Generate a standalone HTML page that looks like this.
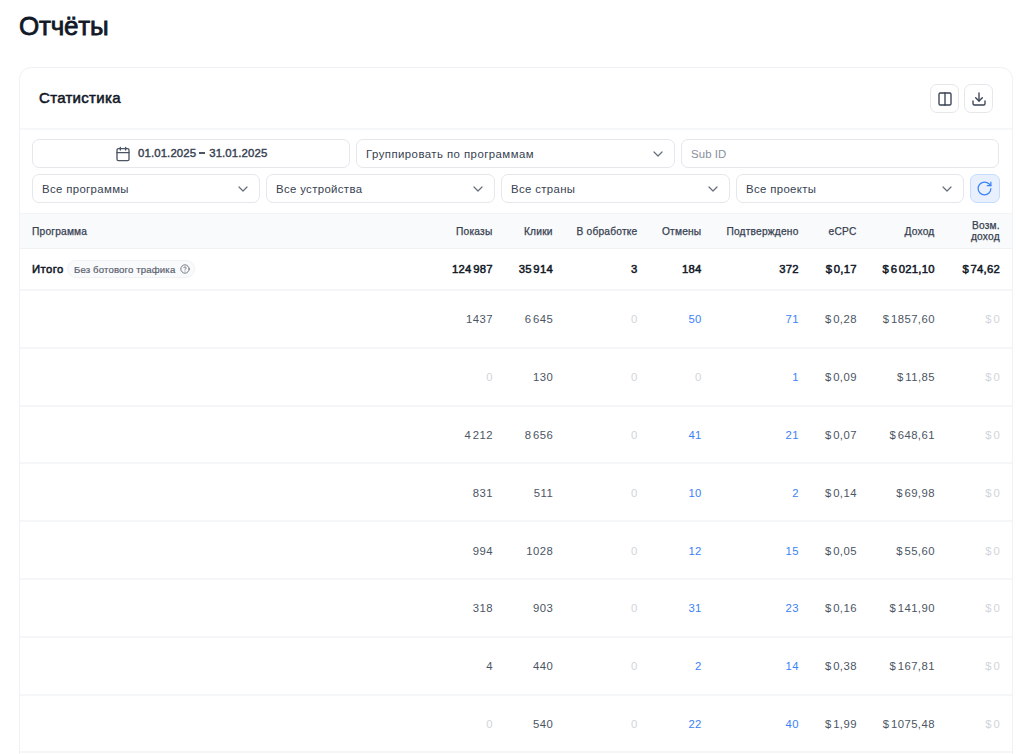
<!DOCTYPE html>
<html><head><meta charset="utf-8">
<style>
*{box-sizing:border-box;margin:0;padding:0}
html,body{width:1024px;height:754px;overflow:hidden;background:#fff;font-family:"Liberation Sans",sans-serif;color:#111827}
.a{position:absolute;white-space:nowrap}
.r{position:absolute;white-space:nowrap;text-align:right}
h1{position:absolute;left:19px;top:11px;font-size:26px;font-weight:normal;-webkit-text-stroke:0.8px #111827;line-height:30px;color:#111827;letter-spacing:-0.2px}
.card{position:absolute;left:19px;top:67px;width:994px;height:720px;border:1px solid #f0f1f4;border-radius:12px;background:#fff}
.hdrline{position:absolute;left:20px;top:128px;width:992px;height:2px;background:#f6f7f9}
.ctitle{left:39px;top:88.5px;font-size:15px;font-weight:normal;-webkit-text-stroke:0.55px #111827;line-height:18px;color:#111827;letter-spacing:0.3px}
.ibtn{position:absolute;top:84px;width:29px;height:29px;border:1px solid #e5e7eb;border-radius:7px;background:#fff;color:#374151}
.ibtn svg{position:absolute;left:6px;top:5.5px}
.inp{position:absolute;height:29px;border:1px solid #e5e7eb;border-radius:7px;background:#fff;font-size:11.4px;color:#374151;line-height:28px;padding-left:9px;white-space:nowrap;letter-spacing:0.35px}
.inp .chev{position:absolute;right:8px;top:6px;color:#666d7a;line-height:0}
.thead{position:absolute;left:20px;top:212.5px;width:992px;height:36px;background:#f9fafb;border-top:1px solid #f3f4f6;border-bottom:1px solid #f1f2f4}
.th{font-size:10.2px;color:#374151;line-height:12px;letter-spacing:0.2px;-webkit-text-stroke:0.25px #374151}
.line{position:absolute;left:20px;width:992px;height:2px;background:#f5f6f8}
.n{font-size:11.3px;color:#4b5563;line-height:14px;letter-spacing:0.45px;margin-right:-0.45px}
.tot{font-weight:normal;-webkit-text-stroke:0.5px #111827;color:#111827;letter-spacing:0.25px;margin-right:-0.25px}
.z{color:#d1d5db}
.bl{color:#3b82f6}
.ts{display:inline-block;width:1.5px}
.badge{position:absolute;left:67px;top:260px;width:128px;height:18px;border:1px solid #f1f2f4;border-radius:9px;background:#f9fafb;font-size:9.6px;color:#5b6270;line-height:17px;padding-left:6px;letter-spacing:0.15px;-webkit-text-stroke:0.2px #5b6270}
.badge svg{position:absolute;left:111.7px;top:3.3px}
</style></head><body>
<h1>Отчёты</h1>
<div class="card"></div>
<div class="hdrline"></div>
<div class="a ctitle">Статистика</div>
<div class="ibtn" style="left:930px"><svg width="16" height="16" viewBox="0 0 24 24" fill="none" stroke="currentColor" stroke-width="2" stroke-linecap="round" stroke-linejoin="round"><rect x="3" y="3" width="18" height="18" rx="2"/><path d="M12 3v18"/></svg></div>
<div class="ibtn" style="left:964px"><svg width="16" height="16" viewBox="0 0 24 24" fill="none" stroke="currentColor" stroke-width="2" stroke-linecap="round" stroke-linejoin="round"><path d="M21 15v4a2 2 0 0 1-2 2H5a2 2 0 0 1-2-2v-4"/><path d="m7 10 5 5 5-5"/><path d="M12 15V3"/></svg></div>
<div class="inp" style="left:32px;top:139px;width:318px;color:#374151;font-weight:bold;padding-left:0"><span style="position:absolute;left:82.2px;top:5.5px;line-height:0;color:#4b5563"><svg width="16" height="16" viewBox="0 0 24 24" fill="none" stroke="currentColor" stroke-width="2" stroke-linecap="round" stroke-linejoin="round"><rect x="3" y="4" width="18" height="18" rx="2"/><path d="M8 2v4M16 2v4M3 10h18"/></svg></span><span style="position:absolute;left:105px;top:-0.7px;letter-spacing:0.12px;font-weight:normal;-webkit-text-stroke:0.4px #374151">01.01.2025 <span style="display:inline-block;width:6px;height:1.7px;background:#4b5563;vertical-align:3.6px;margin-left:-0.3px;margin-right:0.7px"></span> 31.01.2025</span></div>
<div class="inp" style="left:356px;top:139px;width:319px;letter-spacing:0.45px">Группировать по программам<span class="chev"><svg width="16" height="16" viewBox="0 0 24 24" fill="none" stroke="currentColor" stroke-width="1.8" stroke-linecap="round" stroke-linejoin="round"><path d="m6 9 6 6 6-6"/></svg></span></div>
<div class="inp" style="left:681px;top:139px;width:318px;color:#878e9b;letter-spacing:0.1px">Sub ID</div>
<div class="inp" style="left:32px;top:174px;width:228px;">Все программы<span class="chev"><svg width="16" height="16" viewBox="0 0 24 24" fill="none" stroke="currentColor" stroke-width="1.8" stroke-linecap="round" stroke-linejoin="round"><path d="m6 9 6 6 6-6"/></svg></span></div>
<div class="inp" style="left:266px;top:174px;width:229px;">Все устройства<span class="chev"><svg width="16" height="16" viewBox="0 0 24 24" fill="none" stroke="currentColor" stroke-width="1.8" stroke-linecap="round" stroke-linejoin="round"><path d="m6 9 6 6 6-6"/></svg></span></div>
<div class="inp" style="left:501px;top:174px;width:229px;">Все страны<span class="chev"><svg width="16" height="16" viewBox="0 0 24 24" fill="none" stroke="currentColor" stroke-width="1.8" stroke-linecap="round" stroke-linejoin="round"><path d="m6 9 6 6 6-6"/></svg></span></div>
<div class="inp" style="left:736px;top:174px;width:228px;">Все проекты<span class="chev"><svg width="16" height="16" viewBox="0 0 24 24" fill="none" stroke="currentColor" stroke-width="1.8" stroke-linecap="round" stroke-linejoin="round"><path d="m6 9 6 6 6-6"/></svg></span></div>
<div class="inp" style="left:970px;top:174px;width:29.5px;background:#e8f0fe;border-color:#c7dbfc;color:#3b82f6;padding:0"><span style="position:absolute;left:4.5px;top:5.2px;line-height:0"><svg width="17" height="17" viewBox="0 0 24 24" fill="none" stroke="currentColor" stroke-width="1.75" stroke-linecap="round" stroke-linejoin="round"><path d="M21 12a9 9 0 1 1-9-9c2.52 0 4.93 1 6.74 2.74L21 8"/><path d="M21 3v5h-5"/></svg></span></div>
<div class="thead"></div>
<div class="a th" style="left:32px;top:225.5px">Программа</div>
<div class="r th" style="right:531.5px;top:225.5px">Показы</div>
<div class="r th" style="right:471.29999999999995px;top:225.5px">Клики</div>
<div class="r th" style="right:386.6px;top:225.5px">В обработке</div>
<div class="r th" style="right:322.6px;top:225.5px">Отмены</div>
<div class="r th" style="right:225.5px;top:225.5px">Подтверждено</div>
<div class="r th" style="right:167.5px;top:225.5px">eCPC</div>
<div class="r th" style="right:89.5px;top:225.5px">Доход</div>
<div class="r th" style="right:24.200000000000045px;top:220.8px;line-height:10.8px">Возм.<br>доход</div>
<div class="a n tot" style="left:32px;top:262px;letter-spacing:0.45px">Итого</div>
<div class="badge">Без ботового трафика<svg width="10" height="10" viewBox="0 0 24 24" fill="none" stroke="currentColor" stroke-width="2" stroke-linecap="round" stroke-linejoin="round"><circle cx="12" cy="12" r="10"/><path d="M9.09 9a3 3 0 0 1 5.83 1c0 2-3 3-3 3"/><path d="M12 17h.01"/></svg></div>
<div class="r n tot" style="right:531.5px;top:262px">124<span class="ts"></span>987</div>
<div class="r n tot" style="right:471.29999999999995px;top:262px">35<span class="ts"></span>914</div>
<div class="r n tot" style="right:386.6px;top:262px">3</div>
<div class="r n tot" style="right:322.6px;top:262px">184</div>
<div class="r n tot" style="right:225.5px;top:262px">372</div>
<div class="r n tot" style="right:167.5px;top:262px">$<span class="ts"></span>0,17</div>
<div class="r n tot" style="right:89.5px;top:262px">$<span class="ts"></span>6<span class="ts"></span>021,10</div>
<div class="r n tot" style="right:24.200000000000045px;top:262px">$<span class="ts"></span>74,62</div>
<div class="line" style="top:289.0px"></div>
<div class="r n n" style="right:531.5px;top:312.3px">1437</div>
<div class="r n n" style="right:471.3px;top:312.3px">6<span class="ts"></span>645</div>
<div class="r n n z" style="right:386.6px;top:312.3px">0</div>
<div class="r n n bl" style="right:322.6px;top:312.3px">50</div>
<div class="r n n bl" style="right:225.5px;top:312.3px">71</div>
<div class="r n n" style="right:167.5px;top:312.3px">$<span class="ts"></span>0,28</div>
<div class="r n n" style="right:89.5px;top:312.3px">$<span class="ts"></span>1857,60</div>
<div class="r n n z" style="right:24.2px;top:312.3px">$<span class="ts"></span>0</div>
<div class="line" style="top:346.8px"></div>
<div class="r n n z" style="right:531.5px;top:370.1px">0</div>
<div class="r n n" style="right:471.3px;top:370.1px">130</div>
<div class="r n n z" style="right:386.6px;top:370.1px">0</div>
<div class="r n n z" style="right:322.6px;top:370.1px">0</div>
<div class="r n n bl" style="right:225.5px;top:370.1px">1</div>
<div class="r n n" style="right:167.5px;top:370.1px">$<span class="ts"></span>0,09</div>
<div class="r n n" style="right:89.5px;top:370.1px">$<span class="ts"></span>11,85</div>
<div class="r n n z" style="right:24.2px;top:370.1px">$<span class="ts"></span>0</div>
<div class="line" style="top:404.6px"></div>
<div class="r n n" style="right:531.5px;top:427.9px">4<span class="ts"></span>212</div>
<div class="r n n" style="right:471.3px;top:427.9px">8<span class="ts"></span>656</div>
<div class="r n n z" style="right:386.6px;top:427.9px">0</div>
<div class="r n n bl" style="right:322.6px;top:427.9px">41</div>
<div class="r n n bl" style="right:225.5px;top:427.9px">21</div>
<div class="r n n" style="right:167.5px;top:427.9px">$<span class="ts"></span>0,07</div>
<div class="r n n" style="right:89.5px;top:427.9px">$<span class="ts"></span>648,61</div>
<div class="r n n z" style="right:24.2px;top:427.9px">$<span class="ts"></span>0</div>
<div class="line" style="top:462.4px"></div>
<div class="r n n" style="right:531.5px;top:485.7px">831</div>
<div class="r n n" style="right:471.3px;top:485.7px">511</div>
<div class="r n n z" style="right:386.6px;top:485.7px">0</div>
<div class="r n n bl" style="right:322.6px;top:485.7px">10</div>
<div class="r n n bl" style="right:225.5px;top:485.7px">2</div>
<div class="r n n" style="right:167.5px;top:485.7px">$<span class="ts"></span>0,14</div>
<div class="r n n" style="right:89.5px;top:485.7px">$<span class="ts"></span>69,98</div>
<div class="r n n z" style="right:24.2px;top:485.7px">$<span class="ts"></span>0</div>
<div class="line" style="top:520.2px"></div>
<div class="r n n" style="right:531.5px;top:543.5px">994</div>
<div class="r n n" style="right:471.3px;top:543.5px">1028</div>
<div class="r n n z" style="right:386.6px;top:543.5px">0</div>
<div class="r n n bl" style="right:322.6px;top:543.5px">12</div>
<div class="r n n bl" style="right:225.5px;top:543.5px">15</div>
<div class="r n n" style="right:167.5px;top:543.5px">$<span class="ts"></span>0,05</div>
<div class="r n n" style="right:89.5px;top:543.5px">$<span class="ts"></span>55,60</div>
<div class="r n n z" style="right:24.2px;top:543.5px">$<span class="ts"></span>0</div>
<div class="line" style="top:578.0px"></div>
<div class="r n n" style="right:531.5px;top:601.3px">318</div>
<div class="r n n" style="right:471.3px;top:601.3px">903</div>
<div class="r n n z" style="right:386.6px;top:601.3px">0</div>
<div class="r n n bl" style="right:322.6px;top:601.3px">31</div>
<div class="r n n bl" style="right:225.5px;top:601.3px">23</div>
<div class="r n n" style="right:167.5px;top:601.3px">$<span class="ts"></span>0,16</div>
<div class="r n n" style="right:89.5px;top:601.3px">$<span class="ts"></span>141,90</div>
<div class="r n n z" style="right:24.2px;top:601.3px">$<span class="ts"></span>0</div>
<div class="line" style="top:635.8px"></div>
<div class="r n n" style="right:531.5px;top:659.1px">4</div>
<div class="r n n" style="right:471.3px;top:659.1px">440</div>
<div class="r n n z" style="right:386.6px;top:659.1px">0</div>
<div class="r n n bl" style="right:322.6px;top:659.1px">2</div>
<div class="r n n bl" style="right:225.5px;top:659.1px">14</div>
<div class="r n n" style="right:167.5px;top:659.1px">$<span class="ts"></span>0,38</div>
<div class="r n n" style="right:89.5px;top:659.1px">$<span class="ts"></span>167,81</div>
<div class="r n n z" style="right:24.2px;top:659.1px">$<span class="ts"></span>0</div>
<div class="line" style="top:693.6px"></div>
<div class="r n n z" style="right:531.5px;top:716.9px">0</div>
<div class="r n n" style="right:471.3px;top:716.9px">540</div>
<div class="r n n z" style="right:386.6px;top:716.9px">0</div>
<div class="r n n bl" style="right:322.6px;top:716.9px">22</div>
<div class="r n n bl" style="right:225.5px;top:716.9px">40</div>
<div class="r n n" style="right:167.5px;top:716.9px">$<span class="ts"></span>1,99</div>
<div class="r n n" style="right:89.5px;top:716.9px">$<span class="ts"></span>1075,48</div>
<div class="r n n z" style="right:24.2px;top:716.9px">$<span class="ts"></span>0</div>
<div class="line" style="top:751.4px"></div>
</body></html>
